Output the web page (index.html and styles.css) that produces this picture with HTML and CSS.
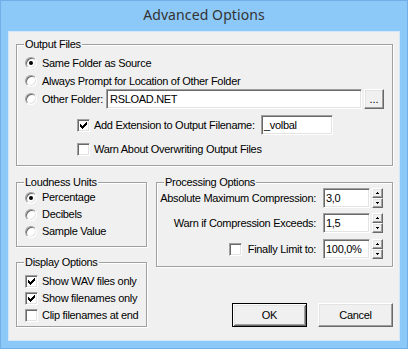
FILE: index.html
```html
<!DOCTYPE html>
<html>
<head>
<meta charset="utf-8">
<title>Advanced Options</title>
<link rel="stylesheet" href="styles.css">
</head>
<body>
<div class="window">
  <div class="titlebar">Advanced Options</div>
  <div class="client">
    <div class="group g-output">
      <span class="legend">Output Files</span>
      <div class="row r1"><span class="radio on"></span><span class="txt">Same Folder as Source</span></div>
      <div class="row r2"><span class="radio"></span><span class="txt">Always Prompt for Location of Other Folder</span></div>
      <div class="row r3"><span class="radio"></span><span class="txt lbl-folder">Other Folder:</span><span class="field f-folder">RSLOAD.NET</span><span class="btn3d browse">...</span></div>
      <div class="row r4"><span class="check"><svg width="7" height="7" viewBox="0 0 7 7"><path d="M0 2h1v1h1v1h1v-1h1v-1h1v-1h1v-1h1v3h-1v1h-1v1h-1v1h-1v1h-1v-1h-1v-1h-1z"/></svg></span><span class="txt lbl-ext">Add Extension to Output Filename:</span><span class="field f-ext">_volbal</span></div>
      <div class="row r5"><span class="check"></span><span class="txt">Warn About Overwriting Output Files</span></div>
    </div>
    <div class="lower">
      <div class="leftcol">
        <div class="group g-loud">
          <span class="legend">Loudness Units</span>
          <div class="item"><span class="radio on"></span><span class="txt">Percentage</span></div>
          <div class="item"><span class="radio"></span><span class="txt">Decibels</span></div>
          <div class="item"><span class="radio"></span><span class="txt">Sample Value</span></div>
        </div>
        <div class="group g-disp">
          <span class="legend">Display Options</span>
          <div class="item"><span class="check"><svg width="7" height="7" viewBox="0 0 7 7"><path d="M0 2h1v1h1v1h1v-1h1v-1h1v-1h1v-1h1v3h-1v1h-1v1h-1v1h-1v1h-1v-1h-1v-1h-1z"/></svg></span><span class="txt">Show WAV files only</span></div>
          <div class="item"><span class="check"><svg width="7" height="7" viewBox="0 0 7 7"><path d="M0 2h1v1h1v1h1v-1h1v-1h1v-1h1v-1h1v3h-1v1h-1v1h-1v1h-1v1h-1v-1h-1v-1h-1z"/></svg></span><span class="txt">Show filenames only</span></div>
          <div class="item"><span class="check"></span><span class="txt">Clip filenames at end</span></div>
        </div>
      </div>
      <div class="rightcol">
        <div class="group g-proc">
          <span class="legend">Processing Options</span>
          <div class="prow">
            <span class="plabel">Absolute Maximum Compression:</span>
            <span class="field f-num">3,0</span>
            <span class="spin"><span class="btn3d sb"><svg width="5" height="3" viewBox="0 0 5 3"><path d="M2 0h1v1h1v1h-3v-1h1z"/></svg></span><span class="btn3d sb"><svg width="5" height="3" viewBox="0 0 5 3"><path d="M1 0h3v1h-1v1h-1v-1h-1z"/></svg></span></span>
          </div>
          <div class="prow">
            <span class="plabel">Warn if Compression Exceeds:</span>
            <span class="field f-num">1,5</span>
            <span class="spin"><span class="btn3d sb"><svg width="5" height="3" viewBox="0 0 5 3"><path d="M2 0h1v1h1v1h-3v-1h1z"/></svg></span><span class="btn3d sb"><svg width="5" height="3" viewBox="0 0 5 3"><path d="M1 0h3v1h-1v1h-1v-1h-1z"/></svg></span></span>
          </div>
          <div class="prow prow-last">
            <span class="plabel"><span class="check"></span><span class="txt limit">Finally Limit to:</span></span>
            <span class="field f-num">100,0%</span>
            <span class="spin"><span class="btn3d sb"><svg width="5" height="3" viewBox="0 0 5 3"><path d="M2 0h1v1h1v1h-3v-1h1z"/></svg></span><span class="btn3d sb"><svg width="5" height="3" viewBox="0 0 5 3"><path d="M1 0h3v1h-1v1h-1v-1h-1z"/></svg></span></span>
          </div>
        </div>
        <div class="buttons">
          <span class="btn default">OK</span>
          <span class="btn btn3d">Cancel</span>
        </div>
      </div>
    </div>
  </div>
</div>
</body>
</html>
```

FILE: styles.css
```css
* { box-sizing: border-box; }
html, body { margin: 0; padding: 0; }
body {
  width: 408px;
  height: 349px;
  overflow: hidden;
  font-family: "Liberation Sans", Arial, sans-serif;
  font-size: 11px;
  letter-spacing: -0.3px;
  color: #000;
  background: #8cc8f8;
}
.window {
  width: 408px;
  height: 349px;
  border: 1px solid #70b0e6;
  background: #8cc8f8;
}
.titlebar {
  height: 30px;
  line-height: 28px;
  text-align: center;
  font-family: "Noto Sans", sans-serif;
  font-size: 14px;
  letter-spacing: 0.1px;
  color: #333;
}
.client {
  margin: 0 7px;
  height: 310px;
  border: 1px solid #d2e8fa;
  background: #f0f0f0;
  padding: 12px 6px 0 7px;
}
.group {
  position: relative;
  border: 1px solid #a0a0a0;
  box-shadow: inset 1px 1px 0 #fff, 1px 1px 0 #fff;
}
.legend {
  position: absolute;
  top: -7px;
  left: 7px;
  padding: 0 1px;
  background: #f0f0f0;
  line-height: 13px;
  white-space: nowrap;
}
.txt { line-height: 13px; white-space: nowrap; }

.radio {
  flex: none;
  position: relative;
  width: 12px;
  height: 12px;
  border-radius: 50%;
  background: #fff;
  border: 1px solid;
  border-color: #a0a0a0 #fff #fff #a0a0a0;
  box-shadow: inset 1px 1px 0 #696969, inset -1px -1px 0 #e3e3e3;
}
.radio.on::after {
  content: "";
  position: absolute;
  left: 3px;
  top: 3px;
  width: 4px;
  height: 4px;
  border-radius: 50%;
  background: #000;
}
.check {
  flex: none;
  width: 13px;
  height: 13px;
  background: #fff;
  border: 1px solid;
  border-color: #a0a0a0 #fff #fff #a0a0a0;
  box-shadow: inset 1px 1px 0 #696969, inset -1px -1px 0 #e3e3e3;
  display: flex;
  align-items: center;
  justify-content: center;
}
.check svg { display: block; fill: #000; shape-rendering: crispEdges; }

.field {
  flex: none;
  height: 20px;
  background: #fff;
  border: 1px solid;
  border-color: #a0a0a0 #fff #fff #a0a0a0;
  box-shadow: inset 1px 1px 0 #696969, inset -1px -1px 0 #e3e3e3;
  padding: 0 3px;
  display: flex;
  align-items: center;
  line-height: 13px;
  white-space: nowrap;
  overflow: hidden;
}
.btn3d {
  background: #f0f0f0;
  border: 1px solid;
  border-color: #fff #696969 #696969 #fff;
  box-shadow: inset -1px -1px 0 #a0a0a0, inset 1px 1px 0 #e3e3e3;
}

/* Output files group */
.g-output {
  height: 122px;
  padding: 11px 0 0 8px;
}
.row { display: flex; align-items: center; }
.r1, .r2, .r5 { height: 14px; }
.r2 { margin-top: 4px; }
.r3 { height: 20px; margin-top: 1px; }
.r4 { height: 20px; margin-top: 6px; padding-left: 52px; }
.r5 { margin-top: 7px; padding-left: 52px; }
.row .radio { margin-right: 5px; }
.row .check { margin-right: 4px; }
.lbl-folder { width: 64px; flex: none; }
.f-folder { width: 256px; }
.browse {
  flex: none;
  width: 20px;
  height: 20px;
  margin-left: 2px;
  display: flex;
  align-items: center;
  justify-content: center;
  line-height: 13px;
  letter-spacing: 0;
}
.lbl-ext { width: 167px; flex: none; }
.f-ext { width: 72px; padding-left: 2px; }

/* Lower area */
.lower {
  display: grid;
  grid-template-columns: 131px 237px;
  column-gap: 9px;
  margin-top: 16px;
}
.item { display: flex; align-items: center; height: 17px; }
.item .radio { margin-right: 5px; }
.item .check { margin-right: 4px; }
.g-loud { height: 65px; padding: 6px 0 0 8px; }
.g-disp { height: 65px; margin-top: 15px; padding: 10px 0 0 8px; }

.g-proc { height: 85px; padding: 5px 9px 0 0; }
.prow {
  display: flex;
  align-items: center;
  justify-content: flex-end;
  height: 20px;
}
.prow + .prow { margin-top: 5px; }
.prow-last { margin-top: 6px !important; }
.plabel {
  display: flex;
  align-items: center;
  line-height: 13px;
  white-space: nowrap;
  margin-right: 7px;
}
.plabel .check { margin-right: 6px; }
.f-num { width: 47px; padding-left: 2px; }
.spin {
  flex: none;
  display: flex;
  flex-direction: column;
  width: 11px;
  height: 20px;
  margin-left: 2px;
}
.sb {
  height: 10px;
  display: flex;
  align-items: center;
  justify-content: center;
}
.sb svg { display: block; fill: #000; shape-rendering: crispEdges; }

.buttons {
  display: flex;
  justify-content: flex-end;
  gap: 11px;
  margin-top: 36px;
}
.btn {
  width: 75px;
  height: 24px;
  display: flex;
  align-items: center;
  justify-content: center;
  line-height: 13px;
}
.btn.default {
  background: #f0f0f0;
  border: 1px solid #000;
  box-shadow: inset 1px 1px 0 #fff, inset -1px -1px 0 #696969, inset 2px 2px 0 #e3e3e3, inset -2px -2px 0 #a0a0a0;
}
```
